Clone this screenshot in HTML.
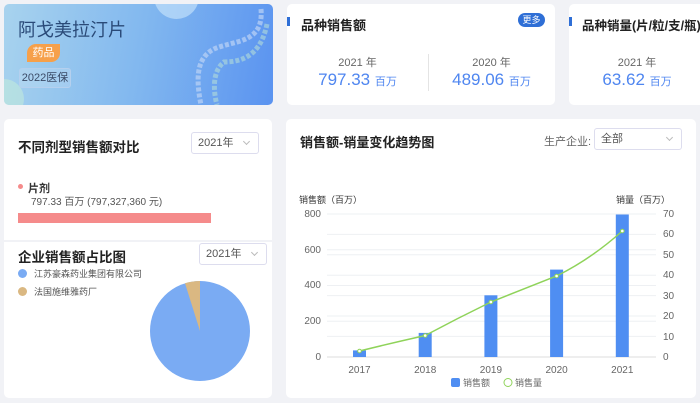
<!DOCTYPE html>
<html><head><meta charset="utf-8"><style>
*{margin:0;padding:0;box-sizing:border-box}
body{width:700px;height:403px;background:#f1f2f6;font-family:"Liberation Sans","Noto Sans CJK SC",sans-serif;position:relative;overflow:hidden;color:#333}
.card{position:absolute;background:#fff;border-radius:5px}
.t{position:absolute;font-weight:bold;font-size:13px;color:#222;white-space:nowrap}
.bar{position:absolute;width:3px;height:9px;background:#2f6fd6}
.sel{position:absolute;border:1px solid #dde;border-radius:3px;font-size:11px;color:#555;padding:0 6px;line-height:20px;background:#fff}
.sel:after{content:"";position:absolute;right:9px;top:6px;width:4px;height:4px;border-right:1px solid #bbb;border-bottom:1px solid #bbb;transform:rotate(45deg)}
.c{position:absolute;text-align:center;font-size:11px;color:#666}
.v{color:#4f86f0;font-size:17px}
.v small{font-size:11px}
</style></head><body>
<div class="card" style="left:4px;top:4px;width:269px;height:101px;background:linear-gradient(100deg,#a8d3ee 0%,#82b8ef 50%,#5a93f0 100%);overflow:hidden">
<div style="position:absolute;left:150px;top:-30px;width:45px;height:45px;border-radius:50%;background:#cde7fb;opacity:.6"></div>
<div style="position:absolute;left:-20px;top:75px;width:40px;height:40px;border-radius:50%;background:#c8f0d8;opacity:.5"></div>
<svg style="position:absolute;left:185px;top:0" width="85" height="101"><path d="M72 5 C75 40 45 36 25 45 C5 55 8 80 12 101" fill="none" stroke-width="5" stroke-dasharray="4 2" stroke="#bcd3f5" opacity=".7"/><path d="M78 20 C72 50 55 58 35 58 C22 68 25 90 28 101" fill="none" stroke-width="5" stroke-dasharray="4 2" stroke="#b2dcd8" opacity=".6"/></svg>
<div style="position:absolute;left:14px;top:12px;font-size:18px;color:#2a4a78">阿戈美拉汀片</div>
<div style="position:absolute;left:23px;top:40px;width:33px;height:18px;background:#f6a04a;border-radius:9px 0 9px 0;color:#fff;font-size:11px;text-align:center;line-height:18px">药品</div>
<div style="position:absolute;left:15px;top:64px;width:52px;height:20px;border:1px solid #b5d0ee;border-radius:3px;font-size:11px;color:#3a4a66;text-align:center;line-height:18px;background:rgba(255,255,255,.15)">2022医保</div>
</div>
<div class="card" style="left:287px;top:4px;width:268px;height:101px">
<div class="bar" style="left:0;top:13px"></div><div class="t" style="left:14px;top:11px">品种销售额</div>
<div style="position:absolute;right:10px;top:9px;width:27px;height:14px;border-radius:7px;background:#2f6fd6;color:#fff;font-size:9px;text-align:center;line-height:14px">更多</div>
<div style="position:absolute;left:141px;top:50px;width:1px;height:37px;background:#e4e4e4"></div>
<div class="c" style="left:0;top:50px;width:141px">2021 年<div class="v">797.33 <small>百万</small></div></div>
<div class="c" style="left:141px;top:50px;width:127px">2020 年<div class="v">489.06 <small>百万</small></div></div>
</div>
<div class="card" style="left:569px;top:4px;width:140px;height:101px">
<div class="bar" style="left:0;top:13px"></div><div class="t" style="left:13px;top:11px;font-size:12.5px">品种销量(片/粒/支/瓶)</div>
<div class="c" style="left:0;top:50px;width:136px">2021 年<div class="v">63.62 <small>百万</small></div></div>
</div>
<div class="card" style="left:4px;top:119px;width:268px;height:279px">
<div class="t" style="left:14px;top:17px;font-size:13.5px">不同剂型销售额对比</div>
<div class="sel" style="left:187px;top:13px;width:68px;height:22px">2021年</div>
<div style="position:absolute;left:14px;top:65px;width:5px;height:5px;border-radius:50%;background:#f58b8b"></div>
<div style="position:absolute;left:24px;top:61px;font-size:11px;font-weight:bold">片剂</div>
<div style="position:absolute;left:27px;top:74px;font-size:10px;color:#555">797.33 百万 (797,327,360 元)</div>
<div style="position:absolute;left:14px;top:94px;width:193px;height:10px;background:#f58b8b"></div>
<div style="position:absolute;left:0;top:121px;width:268px;height:2px;background:#f1f2f6"></div>
<div class="t" style="left:14px;top:127px;font-size:13.5px">企业销售额占比图</div>
<div class="sel" style="left:195px;top:124px;width:68px;height:22px">2021年</div>
<div style="position:absolute;left:14px;top:150px;width:9px;height:9px;border-radius:50%;background:#7aabf3"></div>
<div style="position:absolute;left:30px;top:148px;font-size:9px;color:#555">江苏豪森药业集团有限公司</div>
<div style="position:absolute;left:14px;top:168px;width:9px;height:9px;border-radius:50%;background:#dab882"></div>
<div style="position:absolute;left:30px;top:166px;font-size:9px;color:#555">法国施维雅药厂</div>
<svg style="position:absolute;left:145px;top:161px" width="102" height="102"><circle cx="51" cy="51" r="50" fill="#7aabf3"/><path d="M51 51 L51 1 A50 50 0 0 0 36 3.3 Z" fill="#dab882"/></svg>
</div>
<div class="card" style="left:286px;top:119px;width:410px;height:279px">
<div class="t" style="left:14px;top:13px">销售额-销量变化趋势图</div>
<div style="position:absolute;left:258px;top:14px;font-size:11px;color:#666">生产企业:</div>
<div class="sel" style="left:308px;top:9px;width:88px;height:22px">全部</div>
</div>
<svg style="position:absolute;left:286px;top:119px" width="410" height="279" font-family="Liberation Sans,Noto Sans CJK SC,sans-serif" font-size="10" fill="#666">
<text x="13" y="84" font-size="9" fill="#333">销售额（百万）</text>
<text x="330" y="84" font-size="9" fill="#333">销量（百万）</text>
<g stroke="#eef0f3">
<line x1="41" x2="370" y1="95" y2="95"/><line x1="41" x2="370" y1="115.4" y2="115.4"/><line x1="41" x2="370" y1="130.8" y2="130.8"/><line x1="41" x2="370" y1="135.8" y2="135.8"/><line x1="41" x2="370" y1="156.2" y2="156.2"/><line x1="41" x2="370" y1="166.5" y2="166.5"/><line x1="41" x2="370" y1="176.6" y2="176.6"/><line x1="41" x2="370" y1="197" y2="197"/><line x1="41" x2="370" y1="202.2" y2="202.2"/><line x1="41" x2="370" y1="217.4" y2="217.4"/>
</g>
<line x1="41" x2="370" y1="238" y2="238" stroke="#ddd"/>
<g text-anchor="end"><text x="35" y="98">800</text><text x="35" y="134">600</text><text x="35" y="169">400</text><text x="35" y="205">200</text><text x="35" y="241">0</text></g>
<g><text x="377" y="98">70</text><text x="377" y="118">60</text><text x="377" y="139">50</text><text x="377" y="159">40</text><text x="377" y="180">30</text><text x="377" y="200">20</text><text x="377" y="221">10</text><text x="377" y="241">0</text></g>
<g fill="#4f8ef2"><rect x="67" y="231.4" width="13" height="6.6"/><rect x="132.7" y="213.9" width="13" height="24.1"/><rect x="198.4" y="176.3" width="13" height="61.7"/><rect x="264.1" y="150.6" width="13" height="87.4"/><rect x="329.8" y="95.5" width="13" height="142.5"/></g>
<g text-anchor="middle"><text x="73.5" y="254">2017</text><text x="139.2" y="254">2018</text><text x="204.9" y="254">2019</text><text x="270.6" y="254">2020</text><text x="336.3" y="254">2021</text></g>
<path d="M73.5 232 Q106 224 139.2 216.5 Q172 199 204.9 183 Q238 170 270.6 157 Q305 140 336.3 112" fill="none" stroke="#8fd35a" stroke-width="1.5"/>
<g fill="#fff" stroke="#8fd35a"><circle cx="73.5" cy="232" r="1.8"/><circle cx="139.2" cy="216.5" r="1.8"/><circle cx="204.9" cy="183" r="1.8"/><circle cx="270.6" cy="157" r="1.8"/><circle cx="336.3" cy="112" r="1.8"/></g>
<rect x="165" y="259" width="9" height="9" rx="2" fill="#4f8ef2"/><text x="177" y="267" font-size="9">销售额</text>
<circle cx="222" cy="263.5" r="4" fill="none" stroke="#8fd35a"/><text x="229" y="267" font-size="9">销售量</text>
</svg>
</body></html>
